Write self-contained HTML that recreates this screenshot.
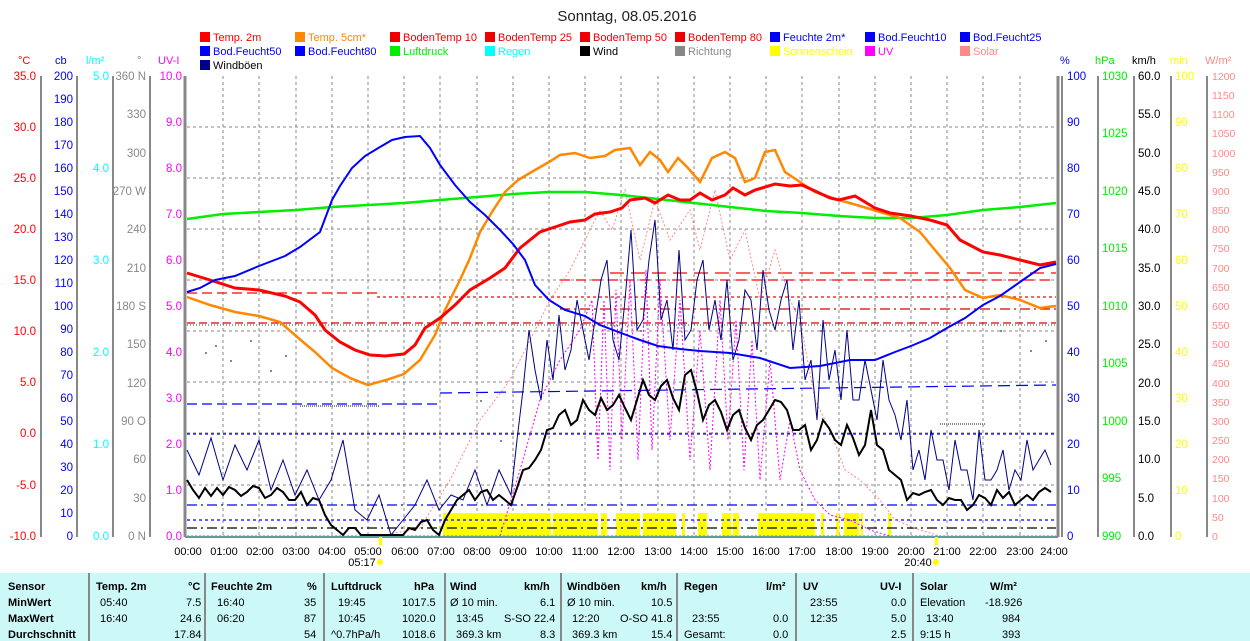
<!DOCTYPE html>
<html><head><meta charset="utf-8"><style>
body{margin:0;background:#fff;width:1250px;height:641px;overflow:hidden;font-family:"Liberation Sans",Arial,sans-serif}
svg{position:absolute;left:0;top:0}
.t{position:absolute;left:0;top:573px;width:1250px;height:68px;background:#ccf8f8;font-size:11px}
.t span{position:absolute;white-space:nowrap}
.b{font-weight:bold}
.sep{position:absolute;top:0;width:2px;height:68px;background:#888}
</style></head><body>
<svg width="1250" height="573" font-family="Liberation Sans, Arial, sans-serif" font-size="11">
<text x="627" y="21" font-size="15" text-anchor="middle" fill="#222">Sonntag, 08.05.2016</text>
<!-- legend -->
<g font-size="11">
<rect x="200" y="32" width="10" height="10" fill="#f00"/><text x="213" y="41" fill="#f00">Temp. 2m</text>
<rect x="295" y="32" width="10" height="10" fill="#f80"/><text x="308" y="41" fill="#f80">Temp. 5cm*</text>
<rect x="390" y="32" width="10" height="10" fill="#e00"/><text x="403" y="41" fill="#e00">BodenTemp 10</text>
<rect x="485" y="32" width="10" height="10" fill="#e00"/><text x="498" y="41" fill="#e00">BodenTemp 25</text>
<rect x="580" y="32" width="10" height="10" fill="#e00"/><text x="593" y="41" fill="#e00">BodenTemp 50</text>
<rect x="675" y="32" width="10" height="10" fill="#e00"/><text x="688" y="41" fill="#e00">BodenTemp 80</text>
<rect x="770" y="32" width="10" height="10" fill="#00f"/><text x="783" y="41" fill="#00f">Feuchte 2m*</text>
<rect x="865" y="32" width="10" height="10" fill="#00f"/><text x="878" y="41" fill="#00f">Bod.Feucht10</text>
<rect x="960" y="32" width="10" height="10" fill="#00f"/><text x="973" y="41" fill="#00f">Bod.Feucht25</text>
<rect x="200" y="46" width="10" height="10" fill="#00f"/><text x="213" y="55" fill="#00f">Bod.Feucht50</text>
<rect x="295" y="46" width="10" height="10" fill="#00f"/><text x="308" y="55" fill="#00f">Bod.Feucht80</text>
<rect x="390" y="46" width="10" height="10" fill="#0e0"/><text x="403" y="55" fill="#0e0">Luftdruck</text>
<rect x="485" y="46" width="10" height="10" fill="#0ff"/><text x="498" y="55" fill="#0ff">Regen</text>
<rect x="580" y="46" width="10" height="10" fill="#000"/><text x="593" y="55" fill="#000">Wind</text>
<rect x="675" y="46" width="10" height="10" fill="#888"/><text x="688" y="55" fill="#888">Richtung</text>
<rect x="770" y="46" width="10" height="10" fill="#ff0"/><text x="783" y="55" fill="#ff0">Sonnenschein</text>
<rect x="865" y="46" width="10" height="10" fill="#f0f"/><text x="878" y="55" fill="#f0f">UV</text>
<rect x="960" y="46" width="10" height="10" fill="#f88"/><text x="973" y="55" fill="#f88">Solar</text>
<rect x="200" y="60" width="10" height="10" fill="#008"/><text x="213" y="69" fill="#000">Windböen</text>
</g>
<!-- axis units -->
<g font-size="11">
<text x="18" y="64" fill="#f00">°C</text><text x="55" y="64" fill="#00f">cb</text><text x="86" y="64" fill="#0ff">l/m²</text>
<text x="137" y="64" fill="#888">°</text><text x="158" y="64" fill="#f0f">UV-I</text>
<text x="1060" y="64" fill="#00f">%</text><text x="1095" y="64" fill="#0e0">hPa</text><text x="1132" y="64" fill="#000">km/h</text>
<text x="1170" y="64" fill="#ff0">min</text><text x="1205" y="64" fill="#f88">W/m²</text>
</g>
<!-- left axes lines -->
<g stroke="#888" stroke-width="2">
<line x1="41" y1="76" x2="41" y2="537"/><line x1="77" y1="76" x2="77" y2="537"/><line x1="113" y1="76" x2="113" y2="537"/><line x1="150" y1="76" x2="150" y2="537"/>
<line x1="1098" y1="76" x2="1098" y2="537"/><line x1="1134" y1="76" x2="1134" y2="537"/><line x1="1171" y1="76" x2="1171" y2="537"/><line x1="1207" y1="76" x2="1207" y2="537"/>
</g>
<g font-size="11.5" text-anchor="end" fill="#f00">
<text x="36" y="80">35.0</text><text x="36" y="131">30.0</text><text x="36" y="182">25.0</text><text x="36" y="233">20.0</text><text x="36" y="284">15.0</text><text x="36" y="335">10.0</text><text x="36" y="386">5.0</text><text x="36" y="437">0.0</text><text x="36" y="489">-5.0</text><text x="36" y="540">-10.0</text>
</g>
<g font-size="11.5" text-anchor="end" fill="#00f">
<text x="73" y="80">200</text><text x="73" y="103">190</text><text x="73" y="126">180</text><text x="73" y="149">170</text><text x="73" y="172">160</text><text x="73" y="195">150</text><text x="73" y="218">140</text><text x="73" y="241">130</text><text x="73" y="264">120</text><text x="73" y="287">110</text><text x="73" y="310">100</text><text x="73" y="333">90</text><text x="73" y="356">80</text><text x="73" y="379">70</text><text x="73" y="402">60</text><text x="73" y="425">50</text><text x="73" y="448">40</text><text x="73" y="471">30</text><text x="73" y="494">20</text><text x="73" y="517">10</text><text x="73" y="540">0</text>
</g>
<g font-size="11.5" text-anchor="end" fill="#0ff">
<text x="109" y="80">5.0</text><text x="109" y="172">4.0</text><text x="109" y="264">3.0</text><text x="109" y="356">2.0</text><text x="109" y="448">1.0</text><text x="109" y="540">0.0</text>
</g>
<g font-size="11.5" text-anchor="end" fill="#888">
<text x="146" y="80">360 N</text><text x="146" y="118">330</text><text x="146" y="157">300</text><text x="146" y="195">270 W</text><text x="146" y="233">240</text><text x="146" y="272">210</text><text x="146" y="310">180 S</text><text x="146" y="348">150</text><text x="146" y="387">120</text><text x="146" y="425">90 O</text><text x="146" y="463">60</text><text x="146" y="502">30</text><text x="146" y="540">0 N</text>
</g>
<g font-size="11.5" text-anchor="end" fill="#f0f">
<text x="182" y="80">10.0</text><text x="182" y="126">9.0</text><text x="182" y="172">8.0</text><text x="182" y="218">7.0</text><text x="182" y="264">6.0</text><text x="182" y="310">5.0</text><text x="182" y="356">4.0</text><text x="182" y="402">3.0</text><text x="182" y="448">2.0</text><text x="182" y="494">1.0</text><text x="182" y="540">0.0</text>
</g>
<g font-size="11.5" fill="#00f">
<text x="1067" y="80">100</text><text x="1067" y="126">90</text><text x="1067" y="172">80</text><text x="1067" y="218">70</text><text x="1067" y="264">60</text><text x="1067" y="310">50</text><text x="1067" y="356">40</text><text x="1067" y="402">30</text><text x="1067" y="448">20</text><text x="1067" y="494">10</text><text x="1067" y="540">0</text>
</g>
<g font-size="11.5" fill="#0e0">
<text x="1102" y="80">1030</text><text x="1102" y="137">1025</text><text x="1102" y="195">1020</text><text x="1102" y="252">1015</text><text x="1102" y="310">1010</text><text x="1102" y="367">1005</text><text x="1102" y="425">1000</text><text x="1102" y="482">995</text><text x="1102" y="540">990</text>
</g>
<g font-size="11.5" fill="#000">
<text x="1138" y="80">60.0</text><text x="1138" y="118">55.0</text><text x="1138" y="157">50.0</text><text x="1138" y="195">45.0</text><text x="1138" y="233">40.0</text><text x="1138" y="272">35.0</text><text x="1138" y="310">30.0</text><text x="1138" y="348">25.0</text><text x="1138" y="387">20.0</text><text x="1138" y="425">15.0</text><text x="1138" y="463">10.0</text><text x="1138" y="502">5.0</text><text x="1138" y="540">0.0</text>
</g>
<g font-size="11.5" fill="#ff0">
<text x="1175" y="80">100</text><text x="1175" y="126">90</text><text x="1175" y="172">80</text><text x="1175" y="218">70</text><text x="1175" y="264">60</text><text x="1175" y="310">50</text><text x="1175" y="356">40</text><text x="1175" y="402">30</text><text x="1175" y="448">20</text><text x="1175" y="494">10</text><text x="1175" y="540">0</text>
</g>
<g font-size="10.5" fill="#f88">
<text x="1212" y="80">1200</text><text x="1212" y="99">1150</text><text x="1212" y="118">1100</text><text x="1212" y="137">1050</text><text x="1212" y="157">1000</text><text x="1212" y="176">950</text><text x="1212" y="195">900</text><text x="1212" y="214">850</text><text x="1212" y="233">800</text><text x="1212" y="252">750</text><text x="1212" y="272">700</text><text x="1212" y="291">650</text><text x="1212" y="310">600</text><text x="1212" y="329">550</text><text x="1212" y="348">500</text><text x="1212" y="367">450</text><text x="1212" y="387">400</text><text x="1212" y="406">350</text><text x="1212" y="425">300</text><text x="1212" y="444">250</text><text x="1212" y="463">200</text><text x="1212" y="482">150</text><text x="1212" y="502">100</text><text x="1212" y="521">50</text><text x="1212" y="540">0</text>
</g>
<!-- plot frame -->
<line x1="185" y1="76" x2="185" y2="537" stroke="#888" stroke-width="3"/>
<line x1="1058" y1="76" x2="1058" y2="537" stroke="#888" stroke-width="3"/>
<line x1="1062" y1="76" x2="1062" y2="537" stroke="#888" stroke-width="2"/>
<line x1="185" y1="537" x2="1058" y2="537" stroke="#888" stroke-width="2"/>
<!-- grid -->
<g stroke="#888" stroke-dasharray="3,3" stroke-width="1">
<line x1="187" y1="127" x2="1056" y2="127"/><line x1="187" y1="178" x2="1056" y2="178"/><line x1="187" y1="229" x2="1056" y2="229"/><line x1="187" y1="280" x2="1056" y2="280"/><line x1="187" y1="331" x2="1056" y2="331"/><line x1="187" y1="382" x2="1056" y2="382"/><line x1="187" y1="433" x2="1056" y2="433"/><line x1="187" y1="485" x2="1056" y2="485"/>
<line x1="223" y1="76" x2="223" y2="536"/><line x1="259" y1="76" x2="259" y2="536"/><line x1="296" y1="76" x2="296" y2="536"/><line x1="332" y1="76" x2="332" y2="536"/><line x1="368" y1="76" x2="368" y2="536"/><line x1="404" y1="76" x2="404" y2="536"/><line x1="440" y1="76" x2="440" y2="536"/><line x1="477" y1="76" x2="477" y2="536"/><line x1="513" y1="76" x2="513" y2="536"/><line x1="549" y1="76" x2="549" y2="536"/><line x1="585" y1="76" x2="585" y2="536"/><line x1="621" y1="76" x2="621" y2="536"/><line x1="658" y1="76" x2="658" y2="536"/><line x1="694" y1="76" x2="694" y2="536"/><line x1="730" y1="76" x2="730" y2="536"/><line x1="766" y1="76" x2="766" y2="536"/><line x1="802" y1="76" x2="802" y2="536"/><line x1="839" y1="76" x2="839" y2="536"/><line x1="875" y1="76" x2="875" y2="536"/><line x1="911" y1="76" x2="911" y2="536"/><line x1="947" y1="76" x2="947" y2="536"/><line x1="983" y1="76" x2="983" y2="536"/><line x1="1020" y1="76" x2="1020" y2="536"/>
</g>
<!-- sunshine -->
<g fill="#ff0">
<rect x="443" y="513" width="108" height="23"/><rect x="553" y="513" width="45" height="23"/><rect x="601" y="513" width="6" height="23"/><rect x="616" y="513" width="24" height="23"/><rect x="643" y="513" width="33" height="23"/><rect x="682" y="513" width="3" height="23"/><rect x="698" y="513" width="9" height="23"/><rect x="722" y="513" width="9" height="23"/><rect x="733" y="513" width="6" height="23"/><rect x="758" y="513" width="57" height="23"/><rect x="821" y="513" width="3" height="23"/><rect x="836" y="513" width="3" height="23"/><rect x="844" y="513" width="15" height="23"/><rect x="861" y="513" width="2" height="23"/><rect x="888" y="513" width="3" height="23"/>
<rect x="379" y="537" width="3" height="8"/><rect x="935" y="537" width="3" height="8"/>
</g>
<!-- horizontal reference lines -->
<g fill="none" stroke-width="1.2">
<polyline stroke="#f00" stroke-dasharray="12,6" points="187,293 377,293 380,297 1056,297" opacity="0"/>
<line x1="187" y1="293" x2="377" y2="293" stroke="#f00" stroke-dasharray="10,5"/>
<line x1="377" y1="297" x2="1056" y2="297" stroke="#f00" stroke-dasharray="3,3"/>
<line x1="610" y1="273" x2="1056" y2="273" stroke="#f00" stroke-dasharray="14,7"/>
<line x1="560" y1="280" x2="1056" y2="280" stroke="#f00" stroke-dasharray="10,6"/>
<line x1="560" y1="309" x2="1056" y2="309" stroke="#d00" stroke-dasharray="10,4,2,4"/>
<line x1="187" y1="323" x2="1056" y2="323" stroke="#d00" stroke-dasharray="8,4"/>
<line x1="187" y1="404" x2="440" y2="404" stroke="#00f" stroke-dasharray="10,5"/>
<line x1="440" y1="393" x2="1056" y2="385" stroke="#00f" stroke-dasharray="12,6"/>
<line x1="187" y1="434" x2="1056" y2="434" stroke="#00f" stroke-dasharray="3,3"/>
<line x1="187" y1="505" x2="1056" y2="505" stroke="#00f" stroke-dasharray="10,4,2,4"/>
<line x1="187" y1="520" x2="1056" y2="520" stroke="#00f" stroke-dasharray="3,3"/>
<line x1="187" y1="528" x2="1056" y2="528" stroke="#000" stroke-dasharray="10,4,2,4"/>
<line x1="187" y1="536" x2="1056" y2="536" stroke="#0cc" stroke-dasharray="2,2"/>
<line x1="187" y1="325" x2="1056" y2="325" stroke="#000" stroke-dasharray="1,2" opacity=".6"/>
<line x1="300" y1="406" x2="380" y2="406" stroke="#888" stroke-dasharray="1,1" stroke-width="2"/>
<line x1="940" y1="424" x2="985" y2="424" stroke="#888" stroke-dasharray="1,1" stroke-width="2"/>
</g>
<!-- solar pink dotted -->
<polyline fill="none" stroke="#f88" stroke-width="1" stroke-dasharray="2,2" points="380,536 420,528 450,480 480,420 510,380 530,340 550,300 570,270 585,240 600,210 612,230 625,190 640,260 655,200 670,240 690,210 700,250 715,190 730,260 745,230 760,300 775,250 790,300 800,320 815,400 830,430 845,470 860,480 880,500 895,520 920,530 940,536"/>
<g fill="none" stroke="#f0f" stroke-width="1" stroke-dasharray="2,2">
<polyline points="500,536 520,470 540,400 560,360 580,330 592,300 598,460 604,300 610,470 616,290 622,440 630,280 638,460 646,270 652,450 660,280 670,440 680,300 690,460 700,330 710,470 720,300 728,440 736,320 744,470 752,340 760,480 770,360 780,480 790,420 800,470 815,500 830,515 850,520 870,530 890,536"/>
</g>
<!-- gray dots -->
<g fill="#888">
<rect x="205" y="352" width="2" height="2"/><rect x="215" y="345" width="2" height="2"/><rect x="230" y="360" width="2" height="2"/><rect x="250" y="340" width="2" height="2"/><rect x="270" y="370" width="2" height="2"/><rect x="285" y="355" width="2" height="2"/><rect x="480" y="400" width="2" height="2"/><rect x="500" y="440" width="2" height="2"/><rect x="640" y="330" width="2" height="2"/><rect x="700" y="370" width="2" height="2"/><rect x="760" y="350" width="2" height="2"/><rect x="820" y="330" width="2" height="2"/><rect x="880" y="380" width="2" height="2"/><rect x="1000" y="330" width="2" height="2"/><rect x="1030" y="350" width="2" height="2"/><rect x="1045" y="340" width="2" height="2"/>
</g>
<!-- windböen navy -->
<polyline fill="none" stroke="#008" stroke-width="1" points="187,450 199,475 211,438 223,480 235,445 247,470 259,440 271,490 283,460 295,495 307,470 319,500 331,480 343,440 355,510 367,520 379,495 391,535 403,520 415,505 427,480 439,510 451,495 463,500 475,470 487,505 499,470 511,495 517,440 523,390 529,330 535,370 541,400 547,340 553,380 559,315 565,370 571,350 577,300 583,330 589,360 595,320 601,280 607,260 613,340 619,360 625,300 631,230 637,330 643,320 649,260 655,220 661,320 667,300 673,350 679,250 685,340 691,330 697,280 703,260 709,330 715,300 721,340 727,280 733,360 739,340 745,290 751,300 757,350 763,270 769,310 775,330 781,300 787,280 793,350 799,300 805,380 811,360 817,420 823,320 829,380 835,350 841,400 847,330 853,400 859,400 865,360 871,390 877,420 883,360 889,400 895,415 901,440 907,400 913,470 919,450 925,480 931,430 937,460 943,460 949,490 955,440 961,470 967,470 973,500 979,430 985,480 991,480 997,470 1003,450 1009,490 1015,470 1021,480 1027,440 1033,470 1039,460 1045,450 1051,465"/>
<!-- luftdruck -->
<polyline fill="none" stroke="#0e0" stroke-width="2.5" points="187,219 223,214 259,212 296,210 332,207 368,205 404,203 440,200 477,197 513,194 549,192 585,192 621,195 658,199 694,203 730,207 766,211 802,213 839,216 875,218 911,218 947,215 983,210 1020,207 1056,203"/>
<!-- temp 5cm -->
<polyline fill="none" stroke="#f80" stroke-width="2.5" points="187,297 210,305 235,312 259,316 280,322 296,336 315,352 332,368 350,378 368,385 386,380 404,374 420,360 435,335 445,310 460,280 470,258 480,232 492,212 505,192 518,180 535,170 549,162 560,155 575,153 590,158 605,156 615,150 630,148 640,165 650,152 660,160 668,172 678,158 688,168 700,182 712,158 725,152 735,158 745,182 755,178 765,152 775,150 785,172 800,182 815,192 839,200 860,206 880,212 900,218 920,232 935,250 950,268 965,290 983,298 1000,295 1020,300 1040,308 1056,306"/>
<!-- temp 2m -->
<polyline fill="none" stroke="#f00" stroke-width="3" points="187,273 210,280 235,288 259,290 285,296 300,302 315,315 325,330 340,342 355,350 370,355 385,356 404,354 415,345 425,328 440,318 455,305 470,290 490,278 505,268 520,248 540,232 555,227 570,222 585,220 595,214 610,212 622,208 630,200 645,198 655,203 668,195 680,200 690,200 700,193 712,200 725,195 733,188 745,195 755,190 762,188 775,184 790,186 802,185 815,191 830,198 839,200 855,196 865,202 875,208 890,213 911,216 930,220 947,225 960,240 983,252 1000,255 1020,260 1040,265 1056,262"/>
<!-- feuchte 2m -->
<polyline fill="none" stroke="#00f" stroke-width="2" points="187,292 200,288 215,280 235,276 259,266 285,256 300,247 320,232 332,200 340,186 352,168 365,156 380,147 392,140 405,137 420,136 430,148 440,165 455,185 470,202 485,215 500,230 513,244 525,260 535,285 549,300 565,310 585,316 600,325 621,333 640,340 658,346 680,349 700,351 730,353 760,358 790,368 820,366 850,360 875,360 895,352 911,346 930,338 947,328 965,318 983,305 1000,296 1020,282 1040,268 1056,264"/>
<!-- wind black -->
<polyline fill="none" stroke="#000" stroke-width="2" points="187,480 193,490 199,498 205,488 211,496 217,488 223,495 229,487 235,490 241,496 247,492 253,486 259,488 265,498 271,495 277,488 283,492 289,500 295,500 301,492 307,505 313,498 319,500 325,515 331,525 337,530 343,535 349,528 355,528 361,535 367,535 379,535 391,535 403,535 409,528 415,530 421,522 427,520 433,530 439,535 445,520 451,510 457,500 463,495 469,490 475,500 481,492 487,490 493,500 499,495 505,500 511,505 517,488 523,470 529,468 535,460 541,450 547,430 553,428 559,415 565,410 571,425 577,420 583,400 589,410 595,415 601,398 607,410 613,405 619,395 625,408 631,420 637,400 643,380 649,395 655,400 661,386 667,380 673,398 679,410 685,375 691,370 697,392 703,420 709,405 715,400 721,412 727,430 733,415 739,410 745,428 751,440 757,425 763,420 769,410 775,400 781,402 787,410 793,430 799,430 805,425 811,450 817,440 823,420 829,428 835,440 841,445 847,425 853,438 859,455 865,445 871,410 877,445 883,450 889,470 895,475 901,480 907,500 913,493 919,495 925,492 931,490 937,500 943,505 949,498 955,500 961,500 967,510 973,505 979,495 985,498 991,505 997,490 1003,498 1009,492 1015,505 1021,500 1027,495 1033,500 1039,492 1045,488 1051,492"/>
<!-- hour labels -->
<g font-size="11" text-anchor="middle" fill="#000">
<text x="188" y="555">00:00</text><text x="224" y="555">01:00</text><text x="260" y="555">02:00</text><text x="296" y="555">03:00</text><text x="332" y="555">04:00</text><text x="368" y="555">05:00</text><text x="405" y="555">06:00</text><text x="441" y="555">07:00</text><text x="477" y="555">08:00</text><text x="513" y="555">09:00</text><text x="549" y="555">10:00</text><text x="585" y="555">11:00</text><text x="621" y="555">12:00</text><text x="658" y="555">13:00</text><text x="694" y="555">14:00</text><text x="730" y="555">15:00</text><text x="766" y="555">16:00</text><text x="802" y="555">17:00</text><text x="839" y="555">18:00</text><text x="875" y="555">19:00</text><text x="911" y="555">20:00</text><text x="947" y="555">21:00</text><text x="983" y="555">22:00</text><text x="1020" y="555">23:00</text><text x="1054" y="555">24:00</text>
<text x="362" y="566">05:17</text><text x="918" y="566">20:40</text>
</g>
<circle cx="380" cy="562" r="3" fill="#ff0"/><circle cx="936" cy="562" r="3" fill="#ff0"/>
</svg>
<div class="t">
<div class="sep" style="left:88px"></div><div class="sep" style="left:204px"></div><div class="sep" style="left:323px"></div><div class="sep" style="left:444px"></div><div class="sep" style="left:560px"></div><div class="sep" style="left:676px"></div><div class="sep" style="left:795px"></div><div class="sep" style="left:912px"></div>
<span class="b" style="left:8px;top:8px">Sensor</span><span class="b" style="left:8px;top:24px">MinWert</span><span class="b" style="left:8px;top:40px">MaxWert</span><span class="b" style="left:8px;top:56px">Durchschnitt</span>
<span class="b" style="left:96px;top:8px">Temp. 2m</span><span class="b" style="left:188px;top:8px">°C</span>
<span style="left:100px;top:24px">05:40</span><span style="left:186px;top:24px">7.5</span>
<span style="left:100px;top:40px">16:40</span><span style="left:180px;top:40px">24.6</span>
<span style="left:174px;top:56px">17.84</span>
<span class="b" style="left:211px;top:8px">Feuchte 2m</span><span class="b" style="left:307px;top:8px">%</span>
<span style="left:217px;top:24px">16:40</span><span style="left:304px;top:24px">35</span>
<span style="left:217px;top:40px">06:20</span><span style="left:304px;top:40px">87</span>
<span style="left:304px;top:56px">54</span>
<span class="b" style="left:331px;top:8px">Luftdruck</span><span class="b" style="left:414px;top:8px">hPa</span>
<span style="left:338px;top:24px">19:45</span><span style="left:402px;top:24px">1017.5</span>
<span style="left:338px;top:40px">10:45</span><span style="left:402px;top:40px">1020.0</span>
<span style="left:331px;top:56px">^0.7hPa/h</span><span style="left:402px;top:56px">1018.6</span>
<span class="b" style="left:450px;top:8px">Wind</span><span class="b" style="left:524px;top:8px">km/h</span>
<span style="left:450px;top:24px">Ø 10 min.</span><span style="left:540px;top:24px">6.1</span>
<span style="left:456px;top:40px">13:45</span><span style="left:504px;top:40px">S-SO 22.4</span>
<span style="left:456px;top:56px">369.3 km</span><span style="left:540px;top:56px">8.3</span>
<span class="b" style="left:567px;top:8px">Windböen</span><span class="b" style="left:641px;top:8px">km/h</span>
<span style="left:567px;top:24px">Ø 10 min.</span><span style="left:651px;top:24px">10.5</span>
<span style="left:572px;top:40px">12:20</span><span style="left:620px;top:40px">O-SO 41.8</span>
<span style="left:572px;top:56px">369.3 km</span><span style="left:651px;top:56px">15.4</span>
<span class="b" style="left:684px;top:8px">Regen</span><span class="b" style="left:766px;top:8px">l/m²</span>
<span style="left:692px;top:40px">23:55</span><span style="left:773px;top:40px">0.0</span>
<span style="left:684px;top:56px">Gesamt:</span><span style="left:773px;top:56px">0.0</span>
<span class="b" style="left:803px;top:8px">UV</span><span class="b" style="left:880px;top:8px">UV-I</span>
<span style="left:810px;top:24px">23:55</span><span style="left:891px;top:24px">0.0</span>
<span style="left:810px;top:40px">12:35</span><span style="left:891px;top:40px">5.0</span>
<span style="left:891px;top:56px">2.5</span>
<span class="b" style="left:920px;top:8px">Solar</span><span class="b" style="left:990px;top:8px">W/m²</span>
<span style="left:920px;top:24px">Elevation</span><span style="left:985px;top:24px">-18.926</span>
<span style="left:926px;top:40px">13:40</span><span style="left:1002px;top:40px">984</span>
<span style="left:920px;top:56px">9:15 h</span><span style="left:1002px;top:56px">393</span>
</div>
</body></html>
